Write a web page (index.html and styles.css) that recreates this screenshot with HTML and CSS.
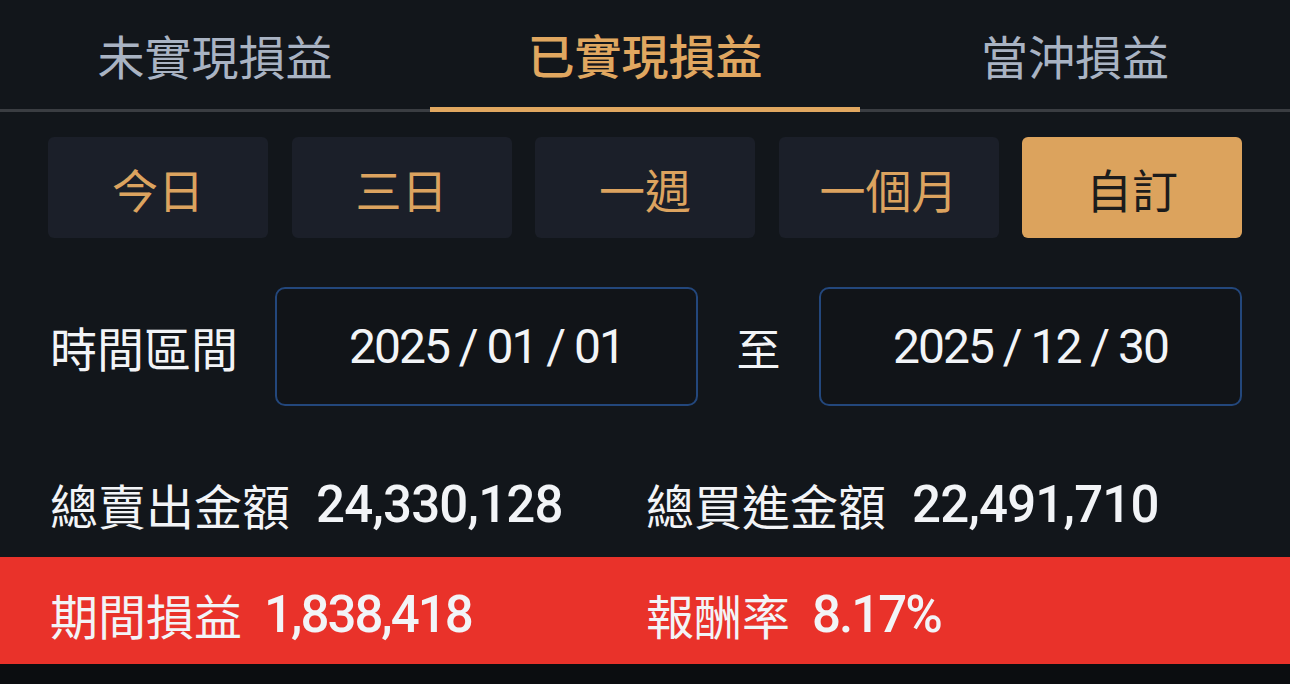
FILE: index.html
```html
<!DOCTYPE html>
<html lang="zh-Hant">
<head>
  <meta charset="UTF-8" />
  <meta name="viewport" content="width=device-width, initial-scale=1.0"/>
  <title>損益查詢</title>
  <link rel="stylesheet" href="styles.css">
</head>
<body>

  <nav class="tabs">
    <div class="tab">未實現損益</div>
    <div class="tab active">已實現損益</div>
    <div class="tab">當沖損益</div>
  </nav>

  <div class="periods">
    <button>今日</button>
    <button>三日</button>
    <button>一週</button>
    <button>一個月</button>
    <button class="active">自訂</button>
  </div>

  <div class="range">
    <div class="range-label">時間區間</div>
    <div class="date-box">2025 / 01 / 01</div>
    <div class="range-sep">至</div>
    <div class="date-box">2025 / 12 / 30</div>
  </div>

  <div class="summary">
    <div class="item"><span class="label">總賣出金額</span><span class="num">24,330,128</span></div>
    <div class="item"><span class="label">總買進金額</span><span class="num">22,491,710</span></div>
  </div>

  <div class="summary result">
    <div class="item"><span class="label">期間損益</span><span class="num">1,838,418</span></div>
    <div class="item"><span class="label">報酬率</span><span class="num">8.17%</span></div>
  </div>

</body>
</html>
```

FILE: styles.css
```css
* {
  box-sizing: border-box;
}
body {
  margin: 0;
  width: 1290px;
  height: 684px;
  overflow: hidden;
  background: #0b0d10;
  color: #f2f4f7;
  font-family: "Noto Sans CJK TC", "Noto Sans", sans-serif;
}
.tabs {
  display: flex;
  background: #12161b;
}
.tabs .tab {
  flex: 1;
  height: 112px;
  display: flex;
  align-items: center;
  justify-content: center;
  font-size: 47px;
  color: #a9b3c3;
  border-bottom: 3px solid #3a3d42;
}
.tabs .tab.active {
  color: #e0a760;
  font-weight: 500;
  border-bottom: 5px solid #e0a760;
}
.periods {
  display: grid;
  grid-template-columns: repeat(5, 1fr);
  gap: 23.5px;
  padding: 25px 48px 0;
  background: #12161b;
}
.periods button {
  height: 101px;
  border: none;
  border-radius: 6px;
  background: #1b1f29;
  color: #dca35f;
  font-family: "Noto Sans CJK TC", sans-serif;
  font-size: 46px;
  padding: 0;
}
.periods button.active {
  background: #dca35d;
  color: #1c1c1c;
}
.range {
  display: flex;
  align-items: center;
  padding: 49px 48px 0 50px;
  background: #12161b;
}
.range-label {
  width: 225px;
  font-size: 47px;
}
.range-sep {
  width: 121px;
  text-align: center;
  font-size: 44px;
}
.date-box {
  flex: 1;
  height: 119px;
  display: flex;
  align-items: center;
  justify-content: center;
  border: 2px solid #23477c;
  border-radius: 10px;
  background: #111418;
  font-family: Roboto, sans-serif;
  font-size: 48px;
  letter-spacing: -2px;
}
.summary {
  display: grid;
  grid-template-columns: 1fr 1fr;
  align-items: end;
  height: 151px;
  padding: 0 48px 23px 50px;
  background: #12161b;
}
.summary .item {
  display: flex;
  align-items: center;
  height: 60px;
}
.summary .label {
  font-size: 48px;
}
.summary .num {
  margin-left: 26px;
  font-family: Roboto, sans-serif;
  font-size: 51px;
  font-weight: 500;
  letter-spacing: -0.8px;
}
.summary.result {
  align-items: start;
  height: 107px;
  padding-top: 27px;
  padding-bottom: 0;
  background: #e9322a;
}
.summary.result .num {
  margin-left: 22px;
  letter-spacing: -2px;
}
```
